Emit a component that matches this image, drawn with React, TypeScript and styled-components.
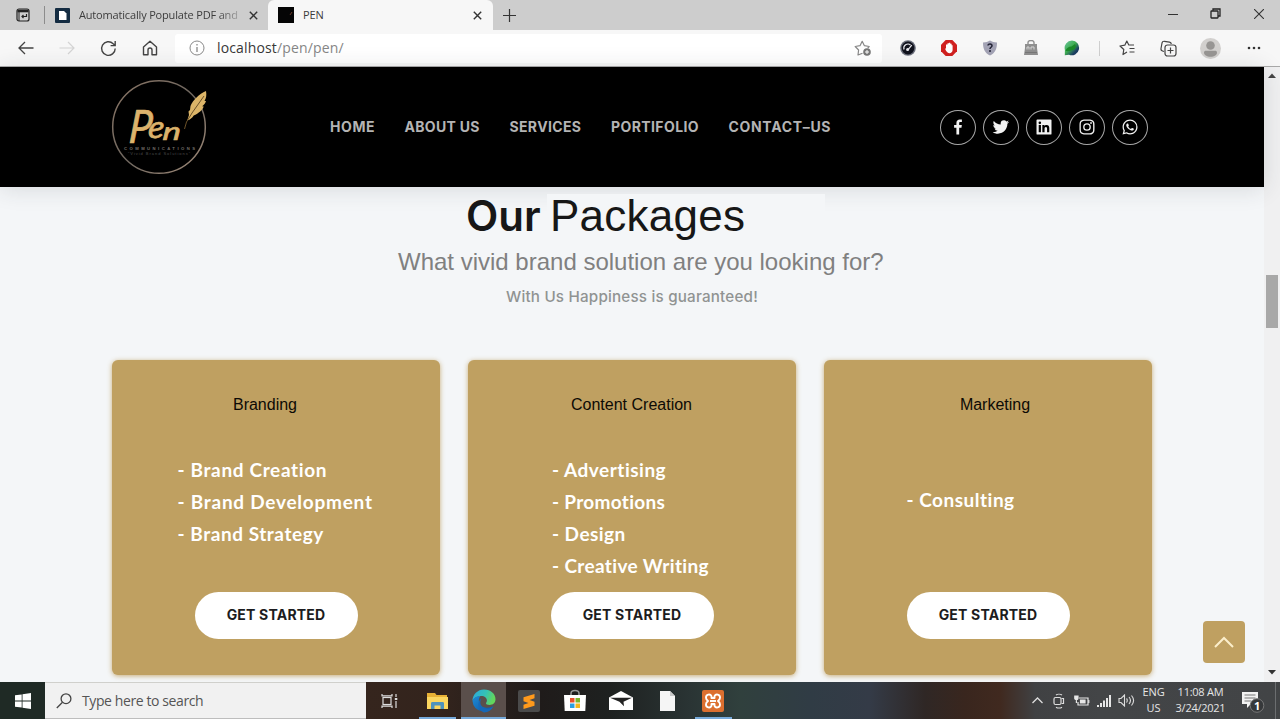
import React from "react";
import styled, { createGlobalStyle } from "styled-components";
import {
  BiLogoFacebook,
  BiLogoTwitter,
  BiLogoLinkedinSquare,
  BiLogoInstagram,
  BiLogoWhatsapp,
} from "react-icons/bi";

const gold = "#bfa061";
const pageColor = "#f4f6f8";
const ui = '"Open Sans", "Noto Sans", sans-serif';
const arial = '"Liberation Sans", Arial, sans-serif';
const display = 'Inter, "Liberation Sans", sans-serif';

const GlobalStyle = createGlobalStyle`
  * { box-sizing: border-box; }
  body { margin: 0; overflow: hidden; }
  svg { display: block; flex: none; }
  ul, h1, h2, h3, p { margin: 0; padding: 0; list-style: none; font-weight: 400; }
  button { border: 0; padding: 0; background: none; font: inherit; color: inherit; }
`;

const Screen = styled.div`
  display: flex;
  flex-direction: column;
  width: 1280px;
  height: 719px;
  overflow: hidden;
  font-family: ${ui};
  background: ${pageColor};
`;

/* ---------- browser chrome ---------- */

const TabStrip = styled.div`
  display: flex;
  align-items: stretch;
  height: 30px;
  background: #cdcdcd;
  color: #333;
`;

const TabMenu = styled.div`
  display: flex;
  align-items: center;
  width: 45px;
  padding-left: 16px;
  background: linear-gradient(#8c8c8c, #8c8c8c) 44px 6px / 1px 18px no-repeat;
`;

const Tab = styled.div<{ $active?: boolean; $width: number }>`
  display: flex;
  align-items: center;
  width: ${(p) => p.$width}px;
  padding: 0 ${(p) => (p.$active ? 11 : 10)}px 0 10px;
  background: ${(p) => (p.$active ? "#f7f7f7" : "transparent")};
  border-radius: ${(p) => (p.$active ? "6px 6px 0 0" : "0")};
`;

const TabTitle = styled.span<{ $fade?: boolean }>`
  flex: 1;
  margin-left: 9px;
  font-size: 11px;
  line-height: 16px;
  letter-spacing: ${(p) => (p.$fade ? "-0.17px" : "-0.1px")};
  color: #3c3c3c;
  white-space: nowrap;
  overflow: hidden;
  ${(p) => p.$fade && "-webkit-mask-image: linear-gradient(90deg, #000 138px, transparent 168px);"}
`;

const NewTab = styled.div`
  display: flex;
  align-items: center;
  justify-content: center;
  width: 32px;
`;

const WindowButtons = styled.div`
  display: flex;
  margin-left: auto;
  height: 27px;
`;

const WindowButton = styled.div`
  display: flex;
  align-items: center;
  justify-content: center;
  width: 43px;
`;

const Toolbar = styled.div`
  display: flex;
  align-items: center;
  height: 37px;
  padding-left: 5px;
  background: #f7f7f7;
  border-bottom: 1px solid #a9a9a9;
`;

const ToolCell = styled.div<{ $width: number }>`
  display: flex;
  align-items: center;
  justify-content: center;
  width: ${(p) => p.$width}px;
`;

const AddressBar = styled.div`
  display: flex;
  align-items: center;
  width: 707px;
  height: 29px;
  margin: 0 6px 0 5px;
  padding: 0 10px 0 14px;
  border-radius: 3px;
  background: #fff;
`;

const Url = styled.div`
  flex: 1;
  margin-left: 12px;
  font-size: 14px;
  line-height: 20px;
  letter-spacing: 0.15px;
  color: #868686;
  span { color: #383838; }
`;

const ToolDivider = styled.div`
  width: 1px;
  height: 15px;
  margin: 0 6px;
  background: #cfcfcf;
`;

/* ---------- page ---------- */

const Viewport = styled.div`
  display: flex;
  height: 615px;
`;

const Page = styled.main`
  position: relative;
  width: 1264px;
  background: ${pageColor};
`;

const SiteHeader = styled.header`
  display: flex;
  align-items: center;
  height: 120px;
  padding-left: 111px;
  background: #000;
  box-shadow: 0 2px 22px rgba(40, 50, 60, 0.14);
`;

const Nav = styled.nav`
  display: flex;
  gap: 30px;
  margin-left: 121px;
  width: 610px;
`;

const NavLink = styled.a<{ $width: number; $track: number }>`
  width: ${(p) => p.$width}px;
  font: 700 14px/20px ${display};
  letter-spacing: ${(p) => p.$track}px;
  color: #b4b4b4;
  white-space: nowrap;
`;

const Socials = styled.div`
  display: flex;
  gap: 7px;
`;

const SocialLink = styled.a`
  display: flex;
  align-items: center;
  justify-content: center;
  width: 36px;
  height: 35px;
  padding-bottom: 1px;
  border: 1.5px solid #a8a8a8;
  border-radius: 50%;
  color: #f2f2f2;
`;

const Intro = styled.section`
  display: flex;
  flex-direction: column;
  align-items: flex-start;
  height: 173px;
  padding-top: 4px;
`;

const Heading = styled.h1`
  display: flex;
  align-items: baseline;
  height: 51px;
  margin-left: 466px;
  line-height: 50px;
  color: #171717;
  white-space: nowrap;
`;

const HeadingBold = styled.span`
  width: 81px;
  font: 600 42px/50px ${display};
`;

const HeadingPlain = styled.span`
  padding: 0 80px 0 3px;
  font: 44px/50px ${arial};
  letter-spacing: 0.25px;
  background: linear-gradient(transparent 3px, ${pageColor} 3px);
`;

const Question = styled.h2`
  margin-left: 398px;
  font: 24px/28px ${arial};
  color: #808080;
  white-space: nowrap;
  padding-top: 6px;
`;

const Promise = styled.p`
  margin: 11px 0 0 506px;
  font: 500 15.200px/20px ${display};
  letter-spacing: 0.2px;
  color: #909392;
  white-space: nowrap;
`;

const Cards = styled.section`
  display: flex;
  gap: 28px;
  padding-left: 112px;
`;

const Card = styled.article`
  display: flex;
  flex-direction: column;
  align-items: center;
  width: 328px;
  height: 315px;
  padding-top: 35px;
  border-radius: 6px;
  background: ${gold};
  box-shadow: 0 1px 5px rgba(191, 160, 97, 0.85);
`;

const CardTitle = styled.h3<{ $shift: number }>`
  position: relative;
  left: ${(p) => p.$shift}px;
  font: 16px/20px ${arial};
  color: #0d0a05;
`;

const Features = styled.ul<{ $indent: number; $top: number }>`
  align-self: stretch;
  height: 176px;
  padding: ${(p) => p.$top}px 0 0 ${(p) => p.$indent}px;
`;

const Feature = styled.li<{ $track: number }>`
  height: 32px;
  font: 700 19px/32px Lato, sans-serif;
  letter-spacing: ${(p) => p.$track}px;
  color: #fff;
  white-space: nowrap;
`;

const CardButton = styled.button`
  width: 163px;
  height: 47px;
  margin-top: 0.5px;
  padding-bottom: 2px;
  border-radius: 24px;
  background: #fff;
  font: 700 14px/45px ${display};
  letter-spacing: 0.2px;
  color: #1c1c20;
`;

const BackToTop = styled.button`
  position: absolute;
  right: 19px;
  bottom: 19px;
  display: flex;
  align-items: center;
  justify-content: center;
  width: 42px;
  height: 42px;
  border-radius: 4px;
  background: ${gold};
`;

const Scrollbar = styled.div`
  display: flex;
  flex-direction: column;
  align-items: center;
  width: 16px;
  padding: 6px 0 7px;
  background: #f0f0f1;
`;

const Thumb = styled.div`
  width: 12px;
  height: 53px;
  margin: 197px 0 auto;
  background: #a8a8a8;
`;

/* ---------- taskbar ---------- */

const Taskbar = styled.footer`
  display: flex;
  align-items: stretch;
  height: 37px;
  background: linear-gradient(90deg, #35251d 366px, #33241d 440px, #1f1b1a 540px, #1e2120 610px, #2a3434 690px, #30403d 740px, #303c45 810px, #343b47 870px, #2f2725 925px, #39261e 965px, #40291f 1000px, #404143 1035px, #434547 1100px, #424446 1280px);
`;

const StartButton = styled.div`
  display: flex;
  align-items: center;
  justify-content: center;
  width: 45px;
  background: #1f2a25;
`;

const SearchBox = styled.div`
  display: flex;
  align-items: center;
  width: 321px;
  padding-left: 11px;
  background: #f1f1f1;
  border-top: 1px solid #d0d0cc;
  border-bottom: 1px solid #bdbdbd;
  font-size: 14px;
  line-height: 20px;
  letter-spacing: -0.4px;
  color: #555;
  span { margin-left: 10px; }
`;

const Apps = styled.div`
  display: flex;
`;

const AppButton = styled.div<{ $active?: boolean; $running?: boolean; $width?: number }>`
  display: flex;
  align-items: center;
  justify-content: center;
  width: ${(p) => p.$width ?? 46}px;
  background: ${(p) =>
    p.$running || p.$active
      ? `linear-gradient(#76aadb, #76aadb) center bottom / ${p.$active ? 46 : 37}px 2px no-repeat`
      : "none"};
  background-color: ${(p) => (p.$active ? "#5a4f4b" : "transparent")};
`;

const Tray = styled.div`
  display: flex;
  align-items: center;
  margin-left: auto;
  color: #e6e6e6;
`;

const TrayText = styled.div<{ $width: number; $track: number }>`
  width: ${(p) => p.$width}px;
  padding-bottom: 2px;
  font-size: 11px;
  line-height: 16px;
  letter-spacing: ${(p) => p.$track}px;
  text-align: center;
  white-space: nowrap;
`;

const ShowDesktop = styled.div`
  align-self: stretch;
  width: 5px;
  border-left: 1px solid #6c6e70;
`;

const CloseIcon = () => (
  <svg width="9" height="9" viewBox="0 0 9 9" stroke="#333" strokeWidth="1.4">
    <path d="M.8.8l7.4 7.4M8.2.8L.8 8.2" />
  </svg>
);

const Logo = () => (
  <svg width="98" height="98" viewBox="0 0 98 98">
    <defs>
      <linearGradient id="ring" x1="0" y1="0" x2="1" y2="1">
        <stop offset="0" stopColor="#8a7565" />
        <stop offset=".5" stopColor="#6f675f" />
        <stop offset="1" stopColor="#a08a78" />
      </linearGradient>
    </defs>
    <circle cx="48" cy="49" r="46.3" fill="none" stroke="url(#ring)" strokeWidth="1.5" />
    <g transform="translate(17 65) skewX(-5)" fontFamily="Lato, sans-serif" fontStyle="italic" fontWeight="400" fill="#dcb36c" stroke="#dcb36c" strokeWidth=".7">
      <text x="0" y="0" fontSize="46" textLength="23" lengthAdjust="spacingAndGlyphs">P</text>
      <text x="19" y="-5" fontSize="31" textLength="16" lengthAdjust="spacingAndGlyphs">e</text>
      <text x="34" y="-3" fontSize="25" textLength="18" lengthAdjust="spacingAndGlyphs">n</text>
    </g>
    <path d="M95 13c-7 3-13 9-15.500 15l-.5 4-1.500 1.500.5 3.500-1.800 5.500c3-1 5-2.500 6.500-5 5-2 9-6 10-9l-1.500-.2c2-1.500 3.500-3.500 3.800-5.300l-1.500.1c1.800-3 2.200-6 1.500-10.100z" fill="#dcb568" />
    <path d="M93 18L81 35l-5.500 9-2 7" stroke="#6b5128" strokeWidth="1" fill="none" />
    <g fontFamily="Liberation Sans, sans-serif" fill="#77716c">
      <text x="13" y="72" fontSize="4.200" fontWeight="700" textLength="71">COMMUNICATIONS</text>
      <text x="17" y="77" fontSize="4" fill="#4c4c4c" textLength="62">“Vivid Brand Solutions”</text>
    </g>
  </svg>
);

const navItems: [string, number, number][] = [
  ["HOME", 44.5, 0.6],
  ["ABOUT US", 75, 0.3],
  ["SERVICES", 71.5, 0.35],
  ["PORTIFOLIO", 87.5, 0.4],
  ["CONTACT–US", 104, 0.68],
];

const packages = [
  {
    title: "Branding", shift: -11, indent: 65.5, top: 39,
    items: [["Brand Creation", 0.65], ["Brand Development", 0.75], ["Brand Strategy", 0.55]],
  },
  {
    title: "Content Creation", shift: -0.5, indent: 84, top: 39,
    items: [["Advertising", 0.5], ["Promotions", 0.3], ["Design", 0.45], ["Creative Writing", 0.35]],
  },
  {
    title: "Marketing", shift: 7, indent: 82.5, top: 69,
    items: [["Consulting", 0.5]],
  },
] as { title: string; shift: number; indent: number; top: number; items: [string, number][] }[];

const BrowserTabs = () => (
  <TabStrip>
    <TabMenu>
      <svg width="14" height="14" viewBox="0 0 14 14" fill="none" stroke="#222" strokeWidth="1.2">
        <rect x="1" y="1" width="12" height="12" rx="2" />
        <path d="M1.500 3h11" strokeWidth="2.6" />
        <path d="M3 4v9" strokeWidth="1" />
        <path d="M10.500 6v2.500H6M7.500 7L6 8.500 7.500 10" />
      </svg>
    </TabMenu>
    <Tab $width={223}>
      <svg width="15" height="15" viewBox="0 0 15 15">
        <rect width="15" height="15" rx="1" fill="#142c42" />
        <path d="M4 3h5l2.500 2.500V12H4z" fill="#fff" />
      </svg>
      <TabTitle $fade>Automatically Populate PDF and</TabTitle>
      <CloseIcon />
    </Tab>
    <Tab $active $width={225}>
      <svg width="16" height="16" viewBox="0 0 16 16">
        <rect width="16" height="16" fill="#050505" />
        <path d="M14 5l-2 3" stroke="#6b3a2a" />
      </svg>
      <TabTitle>PEN</TabTitle>
      <CloseIcon />
    </Tab>
    <NewTab>
      <svg width="13" height="13" viewBox="0 0 13 13" stroke="#333" strokeWidth="1.2">
        <path d="M6.500 0v13M0 6.500h13" />
      </svg>
    </NewTab>
    <WindowButtons>
      <WindowButton>
        <svg width="10" height="10" viewBox="0 0 10 10"><path d="M0 5.500h10" stroke="#333" /></svg>
      </WindowButton>
      <WindowButton>
        <svg width="11" height="11" viewBox="0 0 11 11" fill="none" stroke="#222" strokeWidth="1.300">
          <rect x="1" y="3" width="7" height="7" rx=".5" />
          <path d="M3 2.800V1h7v7H8" />
        </svg>
      </WindowButton>
      <WindowButton>
        <svg width="10" height="10" viewBox="0 0 10 10" stroke="#333" strokeWidth="1.100"><path d="M0 0l10 10M10 0L0 10" /></svg>
      </WindowButton>
    </WindowButtons>
  </TabStrip>
);

const BrowserToolbar = () => (
  <Toolbar>
    <ToolCell $width={41}>
      <svg width="16" height="14" viewBox="0 0 16 14" fill="none" stroke="#444" strokeWidth="1.300"><path d="M15.500 7H1M7 1L1 7l6 6" /></svg>
    </ToolCell>
    <ToolCell $width={42}>
      <svg width="16" height="14" viewBox="0 0 16 14" fill="none" stroke="#d4d4d4" strokeWidth="1.200"><path d="M.5 7H15M9 1l6 6-6 6" /></svg>
    </ToolCell>
    <ToolCell $width={41}>
      <svg width="17" height="17" viewBox="0 0 17 17" fill="none" stroke="#444" strokeWidth="1.400"><path d="M15.200 8.500a6.800 6.800 0 1 1-2-4.800L15.200 5.500M15.200 1v4.600h-4.600" /></svg>
    </ToolCell>
    <ToolCell $width={41}>
      <svg width="16" height="16" viewBox="0 0 16 16" fill="none" stroke="#444" strokeWidth="1.400" strokeLinejoin="round"><path d="M1.500 7L8 1.200 14.500 7v7.800H10V10a2 2 0 0 0-4 0v4.800H1.500z" /></svg>
    </ToolCell>
    <AddressBar>
      <svg width="16" height="16" viewBox="0 0 16 16" fill="none" stroke="#8a8a8a"><circle cx="8" cy="8" r="7" /><path d="M8 7v5M8 4v1.500" strokeWidth="1.300" /></svg>
      <Url><span>localhost</span>/pen/pen/</Url>
      <svg width="18" height="17" viewBox="0 0 18 17" fill="none" stroke="#888" strokeWidth="1.200" strokeLinejoin="round">
        <path d="M8.500 13.200L4 15l.6-5L1.200 6.500l4.800-.8L8.200 1.300l2.200 4.400 4.800.8-1.500 1.600" />
        <circle cx="13" cy="12" r="3.800" fill="#777" stroke="none" />
        <path d="M11 12h4M13 10v4" stroke="#fff" strokeWidth="1" />
      </svg>
    </AddressBar>
    <ToolCell $width={40}>
      <svg width="16" height="16" viewBox="0 0 16 16"><circle cx="8" cy="8" r="7.800" fill="#6b6f7c" /><circle cx="8" cy="8" r="6.400" fill="#10121d" /><path d="M4 9.500a4.200 4.200 0 0 1 6.500-4.600M7.800 9.800l4-4.600" fill="none" stroke="#e8e8ee" strokeWidth="1.200" /><circle cx="7.600" cy="9.600" r="1.500" fill="#e8e8ee" /></svg>
    </ToolCell>
    <ToolCell $width={41}>
      <svg width="16" height="16" viewBox="0 0 16 16"><path d="M4.700 0h6.600L16 4.700v6.600L11.300 16H4.700L0 11.300V4.700z" fill="#d0201f" /><path d="M5 8V4.500h1.500V3.300H8V2.800h1.300v1h1.300v1.500h1V10c0 2-1.300 3.200-3.300 3.200C6.300 13.200 5 11 4.200 9z" fill="#fff" /></svg>
    </ToolCell>
    <ToolCell $width={41}>
      <svg width="14" height="16" viewBox="0 0 14 16"><path d="M0 2.500C3 2.500 5 1.500 7 .5c2 1 4 2 7 2 0 6-1.500 10.500-7 13C1.500 13 0 8.500 0 2.500z" fill="#a3a3b5" /><path d="M5 5.600C5 3.500 9 3.600 9 5.800 9 7.300 7 7.200 7 9" fill="none" stroke="#222236" strokeWidth="1.500" /><circle cx="7" cy="11" r="1" fill="#222236" /></svg>
    </ToolCell>
    <ToolCell $width={41}>
      <svg width="14" height="16" viewBox="0 0 14 16"><path d="M4 4V2.500a3 2 0 0 1 6 0V4" fill="none" stroke="#8f8f8f" strokeWidth="1.400" /><path d="M1 4h12v4l1 7H0l1-7z" fill="#8f8f8f" /><path d="M3 9.500V7h2v2.500M7 9.500V7h3v2.500" stroke="#d6d6d6" fill="none" /><path d="M1 12.500h12" stroke="#777" /></svg>
    </ToolCell>
    <ToolCell $width={42}>
      <svg width="16" height="16" viewBox="0 0 16 16"><defs><linearGradient id="globe" x1="0" y1="0" x2="1" y2="1"><stop offset="0" stopColor="#6cc4a0" /><stop offset=".45" stopColor="#3fae52" /><stop offset=".75" stopColor="#1d3f63" /><stop offset="1" stopColor="#12324e" /></linearGradient></defs><path d="M8 .5A7.400 7.400 0 1 1 5 14.800L.8 15.300.9 10A7.500 7.500 0 0 1 8 .5z" fill="url(#globe)" /><path d="M1.500 11c1-3 3-4.500 6-4.500L11 4c1.500 2 1 4-1 5.500-2 1-5 2-8.500 1.500z" fill="#1c8a2a" /></svg>
    </ToolCell>
    <ToolDivider />
    <ToolCell $width={42}>
      <svg width="16" height="16" viewBox="0 0 16 16" fill="none" stroke="#444" strokeWidth="1.200" strokeLinejoin="round"><path d="M8 12l-4 2.500.8-5L1 6l4.800-.8L7.800 1l2 4H15M10.500 8.500h5M10.500 12h5" /></svg>
    </ToolCell>
    <ToolCell $width={41}>
      <svg width="17" height="17" viewBox="0 0 17 17" fill="none" stroke="#444" strokeWidth="1.200"><path d="M4 11.500L2.500 11C1 10.500.8 9.500 1 8.500L2 3c.3-1.300 1.200-1.900 2.500-1.700l5 .9c1 .2 1.700.8 1.800 1.800" /><rect x="5" y="5" width="11" height="11" rx="2.500" /><path d="M10.500 7.500v6M7.500 10.500h6" /></svg>
    </ToolCell>
    <ToolCell $width={43}>
      <svg width="21" height="21" viewBox="0 0 21 21"><circle cx="10.500" cy="10.500" r="10.500" fill="#d2d0ce" /><circle cx="10.500" cy="7.500" r="4.300" fill="#979593" /><path d="M4 14.500c0-1.200.8-1.800 2-1.800h9c1.200 0 2 .6 2 1.800 0 2.500-2.700 4.300-6.500 4.300S4 17 4 14.500z" fill="#979593" /></svg>
    </ToolCell>
    <ToolCell $width={44}>
      <svg width="14" height="4" viewBox="0 0 14 4" fill="#333"><circle cx="2" cy="2" r="1.300" /><circle cx="7" cy="2" r="1.300" /><circle cx="12" cy="2" r="1.300" /></svg>
    </ToolCell>
  </Toolbar>
);

const WindowsTaskbar = () => (
  <Taskbar>
    <StartButton>
      <svg width="16" height="16" viewBox="0 0 16 16" fill="#fff"><path d="M0 2.300L6.700 1.400V7.600H0zM7.500 1.300L16 0v7.600H7.500zM0 8.400h6.700v6.200L0 13.700zM7.500 8.400H16V16l-8.500-1.200z" /></svg>
    </StartButton>
    <SearchBox>
      <svg width="16" height="16" viewBox="0 0 16 16" fill="none" stroke="#444" strokeWidth="1.300"><circle cx="10" cy="5.700" r="4.900" /><path d="M6.500 9.300L.8 15" /></svg>
      <span>Type here to search</span>
    </SearchBox>
    <Apps>
      <AppButton $width={47}>
        <svg width="17" height="16" viewBox="0 0 17 16" fill="none" stroke="#ddd" strokeWidth="1.200"><path d="M1 1v1.800h10V1M1 15v-1.800h10V15M15 1v3M15 8v7" /><rect x="2" y="4.500" width="8" height="7" /><path d="M13.800 6h2.500" strokeWidth="2" /></svg>
      </AppButton>
      <AppButton $running $width={48}>
        <svg width="21" height="18" viewBox="0 0 21 18"><path d="M0 1h8l1.500 2H20v14H0z" fill="#e8b135" /><path d="M0 5h21v12H0z" fill="#fbd65f" /><path d="M4 11.500c0-1 .5-1.500 1.500-1.500h10c1 0 1.500.5 1.500 1.500V17h-3.500v-3.500h-6V17H4z" fill="#4e93bd" /></svg>
      </AppButton>
      <AppButton $active $width={45}>
        <svg width="24" height="24" viewBox="0 0 24 24">
          <defs>
            <linearGradient id="edgeTop" x1="0" y1="0" x2="1" y2=".3"><stop offset="0" stopColor="#2aa7e0" /><stop offset=".6" stopColor="#35c2b5" /><stop offset="1" stopColor="#62d65c" /></linearGradient>
            <linearGradient id="edgeLow" x1="0" y1="0" x2="1" y2="1"><stop offset="0" stopColor="#1d8bd6" /><stop offset="1" stopColor="#0c54a0" /></linearGradient>
          </defs>
          <path d="M.5 12A11.500 11.500 0 0 1 12 .5C19 .5 23.500 5 23.500 10.300c0 3.800-2.800 5.700-5.800 5.700-2.500 0-3.700-.8-3.700-1.700 0-.8.900-1.200.9-2.800C14.900 9 12.500 7 9.500 7 5 7 1 9.500.5 12z" fill="url(#edgeTop)" />
          <path d="M.5 12C1 9.300 4.500 7 8.500 7 6 9 5.500 17 13 18.500c3.500.7 6.500-.3 8.500-1.500A11.400 11.400 0 0 1 .5 12z" fill="url(#edgeLow)" />
          <path d="M9.500 9.500C7 13 8.500 19 14 19.600c3.300.3 6-.9 7.500-2.600A11.300 11.300 0 0 1 12 23.500C5 21 5 12 9.500 9.500z" fill="#1668b8" />
        </svg>
      </AppButton>
      <AppButton>
        <svg width="22" height="22" viewBox="0 0 22 22"><rect width="22" height="22" rx="2" fill="#4a4a4a" /><path d="M16.500 4v4.300L11.500 10l5 1.700v4L5.500 19v-4.200l5-1.700-5-1.800V7.300z" fill="#ff9a1c" /></svg>
      </AppButton>
      <AppButton>
        <svg width="22" height="23" viewBox="0 0 22 23"><path d="M7 7V4.500C7 .6 15 .6 15 4.500V7" fill="none" stroke="#999" strokeWidth="1.500" /><path d="M0 6h22l-.7 16H.7z" fill="#fff" /><path d="M6 9h4.500v4.500H6z" fill="#e8502a" /><path d="M11.500 9H16v4.500h-4.500z" fill="#7cb52b" /><path d="M6 14.500h4.500V19H6z" fill="#2c9fe0" /><path d="M11.500 14.500H16V19h-4.500z" fill="#f4b71d" /></svg>
      </AppButton>
      <AppButton>
        <svg width="24" height="20" viewBox="0 0 24 20"><path d="M0 6.500L12 0l12 6.500V19H0z" fill="#fff" /><path d="M1 6.800h22l-8.500 4 .5 4.500-4.500-4.500z" fill="#222" /></svg>
      </AppButton>
      <AppButton>
        <svg width="15" height="20" viewBox="0 0 15 20"><path d="M0 0h10l5 5v15H0z" fill="#f5f5f5" /><path d="M10 0v5h5z" fill="#c8c8c8" /></svg>
      </AppButton>
      <AppButton $running>
        <svg width="22" height="22" viewBox="0 0 22 22" fill="none" stroke="#fff" strokeWidth="1.900" strokeLinejoin="round">
          <rect width="22" height="22" rx="2" fill="#dc6f2f" stroke="none" />
          <path d="M4 7.500A2.900 2.900 0 0 1 9.500 6.200V8h3V6.200A2.900 2.900 0 0 1 18 7.500c0 2-1 2.500-2 3.500 1 1 2 1.500 2 3.500a2.900 2.900 0 0 1-5.500 1.300V14h-3v1.800A2.900 2.900 0 0 1 4 14.500c0-2 1-2.500 2-3.500-1-1-2-1.500-2-3.500z" />
          <path d="M8 11h6" />
        </svg>
      </AppButton>
    </Apps>
    <Tray>
      <ToolCell $width={22}>
        <svg width="11" height="7" viewBox="0 0 11 7" fill="none" stroke="#ddd" strokeWidth="1.300"><path d="M.5 6l5-5 5 5" /></svg>
      </ToolCell>
      <ToolCell $width={22}>
        <svg width="12" height="16" viewBox="0 0 12 16" fill="none" stroke="#ddd" strokeWidth="1.200"><rect x="1" y="4.500" width="7" height="7" rx="1.500" /><path d="M8.500 5.500h2v5h-2M3 2c1.500-1 4.500-1 6 0M3 14.200c1.500 1 4.500 1 6 0" /></svg>
      </ToolCell>
      <ToolCell $width={23}>
        <svg width="16" height="12" viewBox="0 0 16 12" fill="none" stroke="#e6e6e6" strokeWidth="1.200"><path d="M5 3h9v7H4V7" /><path d="M14.800 5v3" /><path d="M6.500 5h4.500v3H6.500z" fill="#e6e6e6" /><path d="M.8 1h3.200v2.500C4 5 .8 5 .8 3.500zM2.400 4.500V8" fill="#e6e6e6" /></svg>
      </ToolCell>
      <ToolCell $width={22}>
        <svg width="14" height="12" viewBox="0 0 14 12" fill="#e6e6e6"><path d="M0 10h2v2H0zM3 8h2v4H3zM6 5.500h2V12H6zM9 3h2v9H9zM12 0h2v12h-2z" /></svg>
      </ToolCell>
      <ToolCell $width={22}>
        <svg width="17" height="13" viewBox="0 0 17 13" fill="none" stroke="#ddd" strokeWidth="1.100"><path d="M1 4.500h2L6.500 1v11L3 8.500H1zM8.500 4.500c1 1 1 3 0 4M11 3c1.700 2 1.700 5 0 7M13.500 1.500c2.500 3 2.500 7 0 10" /></svg>
      </ToolCell>
      <TrayText $width={33} $track={-0.1}>ENG<br />US</TrayText>
      <TrayText $width={61} $track={-0.25}>11:08 AM<br />3/24/2021</TrayText>
      <ToolCell $width={44}>
        <svg width="24" height="24" viewBox="0 0 24 24"><path d="M1 3h16v12h-7l-4 4v-4H1z" fill="#f2f2f2" /><path d="M3.500 6h11M3.500 9h11M3.500 12h7" stroke="#777" /><circle cx="16" cy="16.500" r="6.800" fill="#36383a" stroke="#777" /><text x="13" y="20.500" fontSize="11" fontWeight="700" fontFamily="Open Sans, sans-serif" fill="#fff">1</text></svg>
      </ToolCell>
      <ShowDesktop />
    </Tray>
  </Taskbar>
);

export default function App() {
  return (
    <Screen>
      <GlobalStyle />
      <BrowserTabs />
      <BrowserToolbar />
      <Viewport>
        <Page>
          <SiteHeader>
            <Logo />
            <Nav>
              {navItems.map(([label, width, track]) => (
                <NavLink key={label} $width={width} $track={track}>{label}</NavLink>
              ))}
            </Nav>
            <Socials>
              <SocialLink><BiLogoFacebook size={20} /></SocialLink>
              <SocialLink><BiLogoTwitter size={20} /></SocialLink>
              <SocialLink><BiLogoLinkedinSquare size={20} /></SocialLink>
              <SocialLink><BiLogoInstagram size={20} /></SocialLink>
              <SocialLink><BiLogoWhatsapp size={20} /></SocialLink>
            </Socials>
          </SiteHeader>
          <Intro>
            <Heading>
              <HeadingBold>Our</HeadingBold>
              <HeadingPlain>Packages</HeadingPlain>
            </Heading>
            <Question>What vivid brand solution are you looking for?</Question>
            <Promise>With Us Happiness is guaranteed!</Promise>
          </Intro>
          <Cards>
            {packages.map((pkg) => (
              <Card key={pkg.title}>
                <CardTitle $shift={pkg.shift}>{pkg.title}</CardTitle>
                <Features $indent={pkg.indent} $top={pkg.top}>
                  {pkg.items.map(([item, track]) => (
                    <Feature key={item} $track={track}>- {item}</Feature>
                  ))}
                </Features>
                <CardButton>GET STARTED</CardButton>
              </Card>
            ))}
          </Cards>
          <BackToTop>
            <svg width="20" height="12" viewBox="0 0 20 12" fill="none" stroke="#fbeecb" strokeWidth="2"><path d="M1 11l9-9 9 9" /></svg>
          </BackToTop>
        </Page>
        <Scrollbar>
          <svg width="8" height="5" viewBox="0 0 8 5" fill="#444"><path d="M0 5l4-4.500L8 5z" /></svg>
          <Thumb />
          <svg width="8" height="5" viewBox="0 0 8 5" fill="#333"><path d="M0 0l4 4.500L8 0z" /></svg>
        </Scrollbar>
      </Viewport>
      <WindowsTaskbar />
    </Screen>
  );
}
